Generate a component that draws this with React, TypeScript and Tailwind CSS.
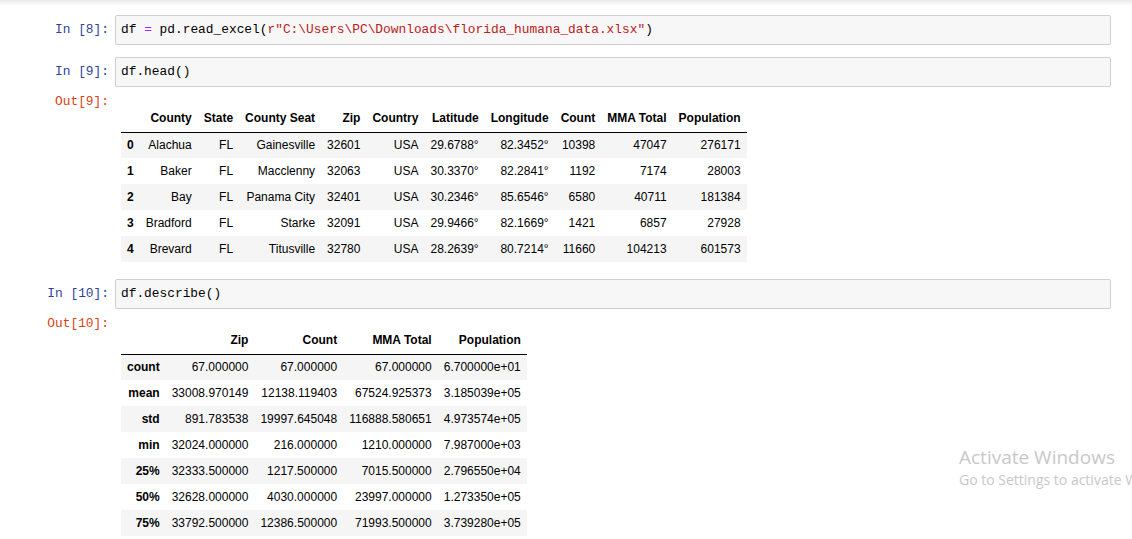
const headCols = ['County', 'State', 'County Seat', 'Zip', 'Country', 'Latitude', 'Longitude', 'Count', 'MMA Total', 'Population'];

const headRows = [
  ['0', 'Alachua', 'FL', 'Gainesville', '32601', 'USA', '29.6788°', '82.3452°', '10398', '47047', '276171'],
  ['1', 'Baker', 'FL', 'Macclenny', '32063', 'USA', '30.3370°', '82.2841°', '1192', '7174', '28003'],
  ['2', 'Bay', 'FL', 'Panama City', '32401', 'USA', '30.2346°', '85.6546°', '6580', '40711', '181384'],
  ['3', 'Bradford', 'FL', 'Starke', '32091', 'USA', '29.9466°', '82.1669°', '1421', '6857', '27928'],
  ['4', 'Brevard', 'FL', 'Titusville', '32780', 'USA', '28.2639°', '80.7214°', '11660', '104213', '601573'],
];

const descCols = ['Zip', 'Count', 'MMA Total', 'Population'];

const descRows = [
  ['count', '67.000000', '67.000000', '67.000000', '6.700000e+01'],
  ['mean', '33008.970149', '12138.119403', '67524.925373', '3.185039e+05'],
  ['std', '891.783538', '19997.645048', '116888.580651', '4.973574e+05'],
  ['min', '32024.000000', '216.000000', '1210.000000', '7.987000e+03'],
  ['25%', '32333.500000', '1217.500000', '7015.500000', '2.796550e+04'],
  ['50%', '32628.000000', '4030.000000', '23997.000000', '1.273350e+05'],
  ['75%', '33792.500000', '12386.500000', '71993.500000', '3.739280e+05'],
];

function InputCell({ n, children }: { n: number; children: React.ReactNode }) {
  return (
    <div className="flex">
      <div className="w-[115px] shrink-0 pr-[6px] text-right leading-[30px] text-[#303F9F] font-['Liberation_Mono',monospace] text-[12.85px]">
        In [{n}]:
      </div>
      <div className="flex-1 h-[30px] flex items-center px-[5px] bg-[#f7f7f7] border border-[#cfcfcf] rounded-[2px] font-['Liberation_Mono',monospace] text-[12.85px] text-black whitespace-pre">
        {children}
      </div>
    </div>
  );
}

function OutputCell({ n, children }: { n: number; children: React.ReactNode }) {
  return (
    <div className="flex mt-[6px]">
      <div className="w-[115px] shrink-0 pr-[6px] text-right leading-[17px] text-[#D84315] font-['Liberation_Mono',monospace] text-[12.85px]">
        Out[{n}]:
      </div>
      <div className="pt-[12px] pl-[6px]">{children}</div>
    </div>
  );
}

function DataTable({ cols, rows }: { cols: string[]; rows: string[][] }) {
  return (
    <table className="border-collapse text-[12px] text-black font-['Liberation_Sans',Arial,sans-serif]">
      <thead>
        <tr className="border-b border-black">
          <th className="h-[27px] px-[6px] pb-[1px]"></th>
          {cols.map((c) => (
            <th key={c} className="h-[27px] px-[6px] pb-[1px] text-right font-bold whitespace-nowrap">
              {c}
            </th>
          ))}
        </tr>
      </thead>
      <tbody>
        {rows.map((r, i) => (
          <tr key={i} className={i % 2 === 0 ? 'bg-[#f5f5f5]' : 'bg-white'}>
            <th className="h-[26px] px-[6px] text-right font-bold whitespace-nowrap">{r[0]}</th>
            {r.slice(1).map((v, j) => (
              <td key={j} className="h-[26px] px-[6px] text-right whitespace-nowrap">
                {v}
              </td>
            ))}
          </tr>
        ))}
      </tbody>
    </table>
  );
}

export default function App() {
  return (
    <div className="relative w-[1132px] h-[539px] overflow-hidden bg-white">
      <div className="h-[6px] bg-gradient-to-b from-[#e9e9e9] to-white" />
      <div className="pt-[9px] pr-[21px]">
        <InputCell n={8}>
          <span>df </span>
          <span className="text-[#AA22FF]">=</span>
          <span> pd.read_excel(</span>
          <span className="text-[#BA2121]">r"C:\Users\PC\Downloads\florida_humana_data.xlsx"</span>
          <span>)</span>
        </InputCell>

        <div className="mt-[12px]">
          <InputCell n={9}>df.head()</InputCell>
        </div>
        <OutputCell n={9}>
          <DataTable cols={headCols} rows={headRows} />
        </OutputCell>

        <div className="mt-[17px]">
          <InputCell n={10}>df.describe()</InputCell>
        </div>
        <OutputCell n={10}>
          <DataTable cols={descCols} rows={descRows} />
        </OutputCell>
      </div>

      <div className="absolute left-[959px] top-[444px] text-[#c8c8c8] font-['Open_Sans',sans-serif] whitespace-nowrap">
        <div className="text-[19px] leading-[26px]">Activate Windows</div>
        <div className="text-[14px] leading-[20px]">Go to Settings to activate Windows.</div>
      </div>
    </div>
  );
}
